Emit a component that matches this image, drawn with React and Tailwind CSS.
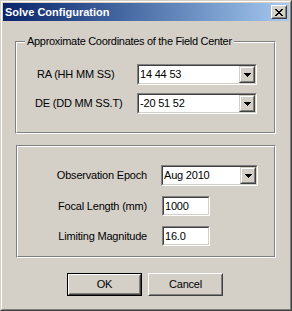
const font = { fontFamily: '"Liberation Sans", Arial, sans-serif' }

function Sunken({ className = '', children }) {
  return (
    <div className={`border border-t-[#808080] border-l-[#808080] border-r-white border-b-white ${className}`}>
      <div className="h-full border border-t-[#404040] border-l-[#404040] border-r-[#d4d0c8] border-b-[#d4d0c8] bg-white flex items-center">
        {children}
      </div>
    </div>
  )
}

function Arrow() {
  return (
    <svg width="7" height="4" viewBox="0 0 7 4" shapeRendering="crispEdges">
      <path d="M0 0h7v1H0zM1 1h5v1H1zM2 2h3v1H2zM3 3h1v1H3z" fill="#000" />
    </svg>
  )
}

function Combo({ value, width }) {
  return (
    <Sunken className={`${width} h-[21px]`}>
      <span className="flex-1 pl-[1px] text-[11px] leading-none tracking-[-0.2px] text-black">{value}</span>
      <div className="w-[16px] h-full border border-t-[#d4d0c8] border-l-[#d4d0c8] border-r-[#404040] border-b-[#404040] bg-[#d4d0c8]">
        <div className="h-full border border-t-white border-l-white border-r-[#808080] border-b-[#808080] flex items-center justify-center">
          <Arrow />
        </div>
      </div>
    </Sunken>
  )
}

function Edit({ value }) {
  return (
    <Sunken className="w-[48px] h-[20px]">
      <span className="pl-[1px] text-[11px] leading-none tracking-[-0.2px] text-black">{value}</span>
    </Sunken>
  )
}

function Group({ className = '', innerClass = '', title, children }) {
  return (
    <div className={`relative border border-t-[#808080] border-l-[#808080] border-r-white border-b-white ${className}`}>
      <div className={`h-full border border-t-white border-l-white border-r-[#808080] border-b-[#808080] ${innerClass}`}>
        {children}
      </div>
      {title && (
        <span className="absolute left-[9px] top-[-7px] px-[2px] bg-[#d4d0c8] text-[11px] leading-[13px] tracking-[-0.3px] text-black">
          {title}
        </span>
      )}
    </div>
  )
}

function Button({ label, isDefault }) {
  const face = (
    <div className="h-full border border-t-white border-l-white border-r-[#404040] border-b-[#404040]">
      <div className="h-full border border-t-[#d4d0c8] border-l-[#d4d0c8] border-r-[#808080] border-b-[#808080] flex items-center justify-center text-[11px] tracking-[-0.2px] text-black">
        {label}
      </div>
    </div>
  )
  return (
    <div className={`w-[75px] h-[23px] bg-[#d4d0c8] ${isDefault ? 'border border-black' : ''}`}>
      {face}
    </div>
  )
}

export default function App() {
  return (
    <div style={font} className="w-[292px] h-[311px] border border-t-[#d4d0c8] border-l-[#d4d0c8] border-r-[#404040] border-b-[#404040] bg-[#d4d0c8]">
      <div className="h-full border border-t-white border-l-white border-r-[#808080] border-b-[#808080] p-px flex flex-col">
        {/* Title bar */}
        <div className="h-[18px] flex items-center bg-linear-to-r from-[#0a246a] to-[#a6caf0]">
          <span className="flex-1 pl-[2px] text-[11px] font-bold text-white leading-none">Solve Configuration</span>
          <div className="mr-[2px] w-[16px] h-[14px] bg-[#d4d0c8] border border-t-white border-l-white border-r-[#404040] border-b-[#404040]">
            <div className="h-full border border-t-[#d4d0c8] border-l-[#d4d0c8] border-r-[#808080] border-b-[#808080] flex items-center justify-center">
              <svg width="8" height="7" viewBox="0 0 8 7" shapeRendering="crispEdges">
                <path d="M0 0h2v1H0zM6 0h2v1H6zM1 1h2v1H1zM5 1h2v1H5zM2 2h4v1H2zM3 3h2v1H3zM2 4h4v1H2zM1 5h2v1H1zM5 5h2v1H5zM0 6h2v1H0zM6 6h2v1H6z" fill="#000" />
              </svg>
            </div>
          </div>
        </div>

        {/* Coordinates group */}
        <Group
          title="Approximate Coordinates of the Field Center"
          className="ml-[12px] mt-[20px] w-[261px] h-[93px]"
          innerClass="pt-[21px] pl-[20px]"
        >
          <div className="grid grid-cols-[100px_120px] gap-y-[8px] items-center text-[11px] tracking-[-0.2px] text-black">
            <span>RA (HH MM SS)</span>
            <Combo value="14 44 53" width="w-[120px]" />
            <span className="ml-[-2px]">DE (DD MM SS.T)</span>
            <Combo value="-20 51 52" width="w-[120px]" />
          </div>
        </Group>

        {/* Settings group */}
        <Group
          className="ml-[13px] mt-[11px] w-[260px] h-[113px]"
          innerClass="pt-[18px] pl-[1px]"
        >
          <div className="grid grid-cols-[128px_auto] gap-x-[14px] gap-y-[10px] items-start text-[11px] tracking-[-0.2px] text-black">
            <span className="h-[21px] flex items-center justify-end">Observation Epoch</span>
            <Combo value="Aug 2010" width="w-[97px]" />
            <span className="h-[20px] flex items-center justify-end">Focal Length (mm)</span>
            <div className="pl-[1px]"><Edit value="1000" /></div>
            <span className="h-[20px] flex items-center justify-end">Limiting Magnitude</span>
            <div className="pl-[1px]"><Edit value="16.0" /></div>
          </div>
        </Group>

        {/* Buttons */}
        <div className="mt-[15px] ml-[64px] flex gap-[6px]">
          <Button label="OK" isDefault />
          <Button label="Cancel" />
        </div>
      </div>
    </div>
  )
}
